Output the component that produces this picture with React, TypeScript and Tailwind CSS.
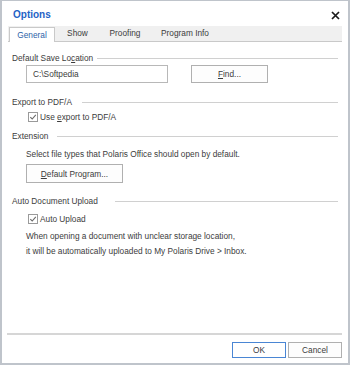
import React from "react";

const font = { fontFamily: '"Liberation Sans", Arial, sans-serif' };

function Check() {
  return (
    <svg width="10" height="10" viewBox="0 0 10 10" className="shrink-0">
      <rect x="0.5" y="0.5" width="9" height="9" fill="#fff" stroke="#9a9a9a" />
      <path d="M2.3 5.2 L4.2 7 L7.8 2.8" fill="none" stroke="#6a6a6a" strokeWidth="1.1" />
    </svg>
  );
}

function Section({ label, w }: { label: React.ReactNode; w: string }) {
  return (
    <div className="flex items-center h-[12px]">
      <div className={`${w} shrink-0 whitespace-nowrap`}>{label}</div>
      <div className="flex-1 h-px bg-[#d0d0d0]" />
    </div>
  );
}

export default function App() {
  return (
    <div
      className="w-[350px] h-[365px] bg-white border-t border-x-2 border-b-2 border-[#bfc4cb] flex flex-col text-[8.3px] leading-[12px] text-[#3c3c3c]"
      style={font}
    >
      {/* header */}
      <div className="h-[25px] flex items-center justify-between pl-[11px] pr-[8px] pt-[3px]">
        <div className="text-[10px] font-bold text-[#1f63c6]">Options</div>
        <svg width="9" height="9" viewBox="0 0 9 9" className="mt-[1px]">
          <path d="M1 1 L8 8 M8 1 L1 8" stroke="#1a1a1a" strokeWidth="1.7" />
        </svg>
      </div>

      {/* tabs */}
      <div className="mx-[6px] h-[16px] bg-[#f0f0f0] border-b border-[#c9c9c9] flex items-end">
        <div className="ml-px w-[46px] h-[15px] -mb-px bg-white border border-b-0 border-[#c9c9c9] text-center text-[#2c5fa8] leading-[14px]">
          General
        </div>
        <div className="w-[45px] h-[15px] text-center leading-[14px]">Show</div>
        <div className="w-[50px] h-[15px] text-center leading-[14px]">Proofing</div>
        <div className="w-[70px] h-[15px] text-center leading-[14px]">Program Info</div>
      </div>

      {/* content */}
      <div className="flex-1 flex flex-col pl-[10px] pr-[10px]">
        <div className="mt-[10px]">
          <Section
            w="w-[85px]"
            label={
              <span>
                Default Save Lo<span className="underline">c</span>ation
              </span>
            }
          />
        </div>
        <div className="mt-[1px] flex items-center h-[18px]">
          <div className="ml-[14px] w-[142px] h-[18px] border border-[#b8b8b8] flex items-center pl-[6px]">
            C:\Softpedia
          </div>
          <div className="ml-[23px] w-[77px] h-[18px] border border-[#b0b0b0] bg-[#fdfdfd] flex items-center justify-center">
            <span>
              <span className="underline">F</span>ind...
            </span>
          </div>
        </div>

        <div className="mt-[13px]">
          <Section w="w-[70px]" label="Export to PDF/A" />
        </div>
        <div className="mt-[3px] ml-[16px] flex items-center gap-[2px] h-[12px]">
          <Check />
          <span>
            Use <span className="underline">e</span>xport to PDF/A
          </span>
        </div>

        <div className="mt-[7px]">
          <Section w="w-[45px]" label="Extension" />
        </div>
        <div className="mt-[6px] ml-[14px]">
          Select file types that Polaris Office should open by default.
        </div>
        <div className="mt-[4px] ml-[14px] w-[97px] h-[19px] border border-[#b0b0b0] bg-[#fdfdfd] flex items-center justify-center">
          <span>
            <span className="underline">D</span>efault Program...
          </span>
        </div>

        <div className="mt-[12px]">
          <Section w="w-[103px]" label="Auto Document Upload" />
        </div>
        <div className="mt-[6px] ml-[16px] flex items-center gap-[2px] h-[12px]">
          <Check />
          <span>Auto Upload</span>
        </div>
        <div className="mt-[5px] ml-[14px]">
          When opening a document with unclear storage location,
        </div>
        <div className="mt-[3px] ml-[14px]">
          it will be automatically uploaded to My Polaris Drive &gt; Inbox.
        </div>
      </div>

      {/* footer */}
      <div className="ml-[5px] mr-[6px] h-[2px] bg-[#d6d6d6]" />
      <div className="mt-[7px] mb-[5px] h-[16px] flex justify-end gap-[2px] pr-[6px]">
        <div className="w-[54px] h-[16px] border border-[#4a86d4] bg-white flex items-center justify-center">
          OK
        </div>
        <div className="w-[54px] h-[16px] border border-[#b0b0b0] bg-[#fdfdfd] flex items-center justify-center">
          Cancel
        </div>
      </div>
    </div>
  );
}
